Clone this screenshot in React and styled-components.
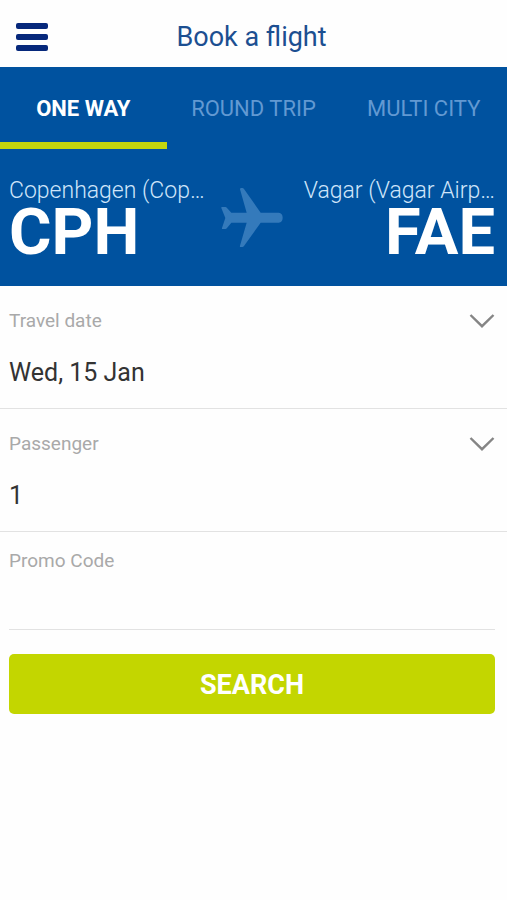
import React, { useState } from 'react'
import styled, { createGlobalStyle } from 'styled-components'

const GlobalStyle = createGlobalStyle`
  * {
    box-sizing: border-box;
  }
  body {
    margin: 0;
    background-color: #fefefe;
    font-family: Roboto, "Liberation Sans", sans-serif;
  }
  button, input, select {
    font-family: inherit;
  }
`

const Header = styled.header`
  display: grid;
  grid-template-columns: 48px 1fr 48px;
  align-items: center;
  height: 67px;
  padding: 6px 12px 0 8px;
`

const MenuButton = styled.button`
  display: flex;
  flex-direction: column;
  gap: 5px;
  width: 48px;
  padding: 8px;
  border: none;
  background: none;
  cursor: pointer;
`

const MenuBar = styled.span`
  width: 32px;
  height: 6px;
  border-radius: 2px;
  background-color: #06287b;
`

const Title = styled.h1`
  margin: 0;
  color: #1c4f91;
  font-size: 27px;
  font-weight: 400;
  line-height: 32px;
  text-align: center;
`

const Hero = styled.section`
  background-color: #00529f;
`

const Tabs = styled.div`
  display: grid;
  grid-template-columns: 167fr 174fr 167fr;
  height: 82px;
`

const Tab = styled.button`
  padding: 9px 0 0;
  border: none;
  border-bottom: 7px solid ${props => (props.$active ? '#c3d60d' : 'transparent')};
  background: none;
  color: ${props => (props.$active ? '#ffffff' : '#6299d2')};
  font-size: 22px;
  font-weight: ${props => (props.$active ? 700 : 400)};
  line-height: 28px;
  cursor: pointer;
`

const Route = styled.div`
  display: grid;
  grid-template-columns: 1fr 62px 1fr;
  padding: 28px 12px 27px 9px;
`

const Airport = styled.button`
  display: flex;
  flex-direction: column;
  align-items: ${props => (props.$end ? 'flex-end' : 'flex-start')};
  min-width: 0;
  padding: 0;
  border: none;
  background: none;
  color: #ffffff;
  white-space: nowrap;
  cursor: pointer;
`

const City = styled.span`
  color: #cfe5fa;
  font-size: 23px;
  font-weight: 300;
  line-height: 28px;
`

const Code = styled.span`
  font-size: 65px;
  font-weight: 700;
  line-height: 54px;
`

const PlaneIcon = styled.svg`
  width: 62px;
  height: 60px;
  margin-top: 11px;
  fill: #347abb;
`

const Field = styled.div`
  display: flex;
  flex-direction: column;
  gap: 26px;
  height: ${props => (props.$short ? '98px' : '123px')};
  margin: ${props => (props.$short ? '0 12px 0 9px' : '0')};
  padding: ${props => (props.$short ? '17px 0 0' : '23px 12px 0 9px')};
  border-bottom: 1px solid #e2e2e2;
`

const FieldLabel = styled.label`
  display: flex;
  align-items: center;
  justify-content: space-between;
  color: #a9a9a9;
  font-size: 19px;
  line-height: 24px;
`

const Chevron = styled.svg`
  width: 26px;
  height: 16px;
  fill: none;
  stroke: #858585;
  stroke-width: 2.4;
`

const DateButton = styled.button`
  padding: 0;
  border: none;
  background: none;
  color: #333333;
  font-size: 25px;
  line-height: 28px;
  text-align: left;
  cursor: pointer;
`

const Select = styled.select`
  appearance: none;
  height: 28px;
  padding: 0;
  border: none;
  background: none;
  color: #333333;
  font-size: 25px;
  line-height: 28px;
`

const PromoInput = styled.input`
  width: 100%;
  height: 28px;
  padding: 0;
  border: none;
  outline: none;
  background: none;
  color: #333333;
  font-size: 25px;
`

const SearchButton = styled.button`
  display: block;
  width: calc(100% - 21px);
  height: 60px;
  margin: 24px 12px 24px 9px;
  padding: 2px 0 0;
  border: none;
  border-radius: 5px;
  background-color: #c3d600;
  color: #ffffff;
  font-size: 27px;
  font-weight: 700;
  cursor: pointer;
`

const tabs = ['ONE WAY', 'ROUND TRIP', 'MULTI CITY']

const ArrowDown = () => (
  <Chevron viewBox="0 0 26 16" aria-hidden="true">
    <path d="M1.5 2 L13 13.2 L24.5 2" />
  </Chevron>
)

const App = () => {
  const [activeTab, setActiveTab] = useState(tabs[0])
  const [passengers, setPassengers] = useState('1')
  const [promo, setPromo] = useState('')

  return (
    <>
      <GlobalStyle />
      <Header>
        <MenuButton type="button" aria-label="Menu">
          <MenuBar />
          <MenuBar />
          <MenuBar />
        </MenuButton>
        <Title>Book a flight</Title>
      </Header>
      <Hero>
        <Tabs role="tablist">
          {tabs.map(tab => (
            <Tab
              key={tab}
              type="button"
              role="tab"
              aria-selected={tab === activeTab}
              $active={tab === activeTab}
              onClick={() => setActiveTab(tab)}
            >
              {tab}
            </Tab>
          ))}
        </Tabs>
        <Route>
          <Airport type="button">
            <City>Copenhagen (Cop…</City>
            <Code>CPH</Code>
          </Airport>
          <PlaneIcon viewBox="35 25 186 180" aria-hidden="true">
            <path d="M92 29 Q92 25 96 25 H99 Q102 25 104 28 L154 99 H208 Q220 101 220 114 Q220 127 208 129 H154 L104 199 Q102 202 99 202 H93 Q91 202 92 198 L112 129 H66 L53 145 Q51 148 48 148 H40 Q37 148 38 145 L48 115 L36 85 Q35 82 38 82 H48 Q51 82 53 85 L66 99 H112 Z" />
          </PlaneIcon>
          <Airport type="button" $end>
            <City>Vagar (Vagar Airp…</City>
            <Code>FAE</Code>
          </Airport>
        </Route>
      </Hero>
      <form onSubmit={e => e.preventDefault()}>
        <Field>
          <FieldLabel htmlFor="date">
            Travel date
            <ArrowDown />
          </FieldLabel>
          <DateButton id="date" type="button">Wed, 15 Jan</DateButton>
        </Field>
        <Field>
          <FieldLabel htmlFor="passengers">
            Passenger
            <ArrowDown />
          </FieldLabel>
          <Select
            id="passengers"
            value={passengers}
            onChange={e => setPassengers(e.target.value)}
          >
            {['1', '2', '3', '4', '5', '6'].map(n => (
              <option key={n} value={n}>{n}</option>
            ))}
          </Select>
        </Field>
        <Field $short>
          <FieldLabel htmlFor="promo">Promo Code</FieldLabel>
          <PromoInput
            id="promo"
            type="text"
            value={promo}
            onChange={e => setPromo(e.target.value)}
          />
        </Field>
        <SearchButton type="submit">SEARCH</SearchButton>
      </form>
    </>
  )
}

export default App
